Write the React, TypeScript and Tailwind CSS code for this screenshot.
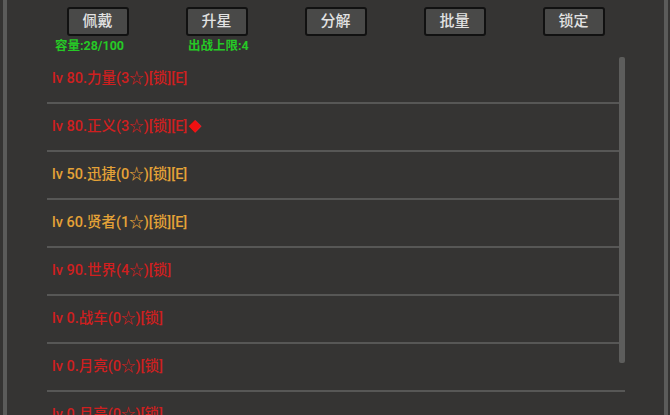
import React from 'react'

type Item = { text: string; color: 'red' | 'orange'; mark?: boolean }

const items: Item[] = [
  { text: 'lv 80.力量(3☆)[锁][E]', color: 'red' },
  { text: 'lv 80.正义(3☆)[锁][E]', color: 'red', mark: true },
  { text: 'lv 50.迅捷(0☆)[锁][E]', color: 'orange' },
  { text: 'lv 60.贤者(1☆)[锁][E]', color: 'orange' },
  { text: 'lv 90.世界(4☆)[锁]', color: 'red' },
  { text: 'lv 0.战车(0☆)[锁]', color: 'red' },
  { text: 'lv 0.月亮(0☆)[锁]', color: 'red' },
  { text: 'lv 0.月亮(0☆)[锁]', color: 'red' },
  { text: 'lv 0.太阳(0☆)[锁]', color: 'red' },
]

const buttons = ['佩戴', '升星', '分解', '批量', '锁定']

export default function App() {
  return (
    <div
      className="w-[670px] h-[415px] overflow-hidden bg-[#353433] pl-[3px] pr-[2px]"
      style={{ fontFamily: 'Roboto, "Noto Sans CJK SC", sans-serif' }}
    >
      <div className="h-full border-x-4 border-[#5b5b5a] flex flex-col">
        {/* Top buttons */}
        <div className="grid grid-cols-5 w-[595px] ml-[31px] pt-[7px]">
          {buttons.map((b) => (
            <div key={b} className="flex justify-center">
              <button className="w-[62px] h-[29px] bg-[#494948] border-2 border-[#111] rounded-[3px] text-[15px] font-medium text-[#e2e2e2] leading-none">
                {b}
              </button>
            </div>
          ))}
        </div>

        {/* Counters */}
        <div className="flex h-[18px] mt-[4px] items-center text-[12.5px] font-bold text-[#26c926] leading-none">
          <span className="ml-[48px] w-[133px]">容量:28/100</span>
          <span>出战上限:4</span>
        </div>

        {/* List */}
        <div className="relative mt-[3px] ml-[40px] w-[578px] flex-1">
          {items.map((it, i) => (
            <div
              key={i}
              className={`h-[48px] border-b-2 border-[#575756] flex items-center pl-[5px] text-[14.5px] font-medium ${
                it.color === 'red' ? 'text-[#cf1f1f]' : 'text-[#e4a237]'
              }`}
            >
              {it.text}
              {it.mark && <span className="text-[#f01010] text-[13px] ml-[1px]">◆</span>}
            </div>
          ))}
          <div className="absolute right-0 top-[1px] w-[6px] h-[306px] bg-[#5d5d5c] rounded-[2px]" />
        </div>
      </div>
    </div>
  )
}
